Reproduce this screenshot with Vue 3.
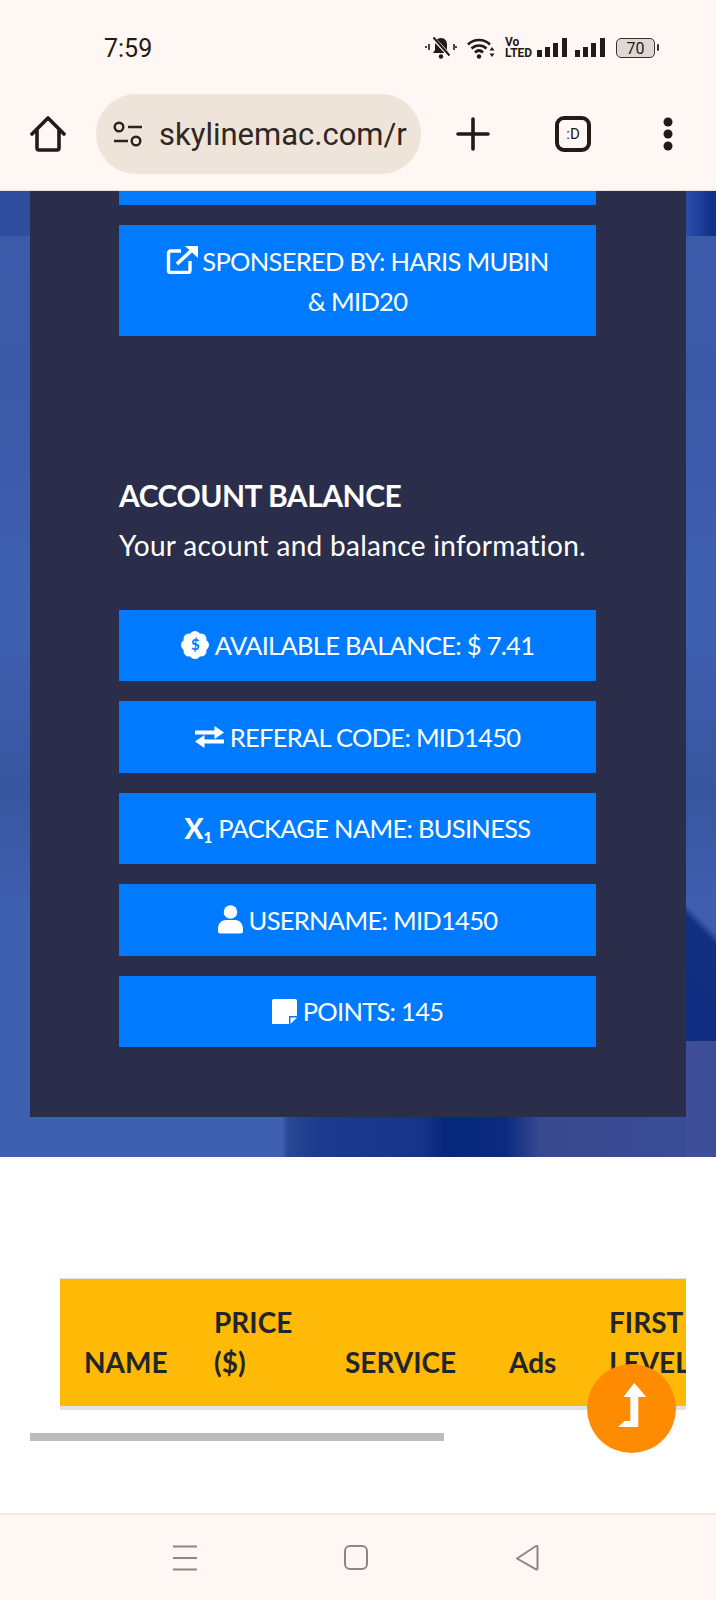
<script setup>
const rows = [
  { key: 'seal', label: 'AVAILABLE BALANCE: $ 7.41' },
  { key: 'swap', label: 'REFERAL CODE: MID1450' },
  { key: 'x', label: 'PACKAGE NAME: BUSINESS' },
  { key: 'user', label: 'USERNAME: MID1450' },
  { key: 'note', label: 'POINTS: 145' },
]
</script>

<template>
  <div class="page">
    <header class="chrome">
      <div class="status">
        <span class="time">7:59</span>
        <div class="status-icons">
          <svg class="s-bell" width="32" height="24" viewBox="0 0 32 24">
            <path d="M16 2c-4 0-6 3-6 7v5l-2 3h16l-2-3V9c0-4-2-7-6-7z" fill="#221a16"/>
            <circle cx="16" cy="20.5" r="2.2" fill="#221a16"/>
            <path d="M8 2l17 18" stroke="#fff7f3" stroke-width="4"/>
            <path d="M8.500 1.500l16 18" stroke="#221a16" stroke-width="2"/>
            <path d="M4 8v6M29 8v6M1 10v2M31 10v2" stroke="#221a16" stroke-width="1.600"/>
          </svg>
          <svg class="s-wifi" width="28" height="22" viewBox="0 0 28 22">
            <path d="M1 7.500c6-6 16-6 22 0M4.500 11.500c4-4 11-4 15 0M8 15.500c2.500-2.500 5.500-2.500 8 0" fill="none" stroke="#221a16" stroke-width="2.600"/>
            <circle cx="12" cy="19.500" r="2.200" fill="#221a16"/>
            <path d="M25 10l2.500 3.500h-5zM25 20l2.500-3.500h-5z" fill="#221a16"/>
          </svg>
          <span class="volte"><i>Vo</i><i>LTED</i></span>
          <svg class="s-sig" width="30" height="20" viewBox="0 0 30 20">
            <path d="M0 12h5v7H0zM8 9h5v10H8zM16 5h5v14h-5zM25 0h5v19h-5z" fill="#221a16"/>
          </svg>
          <svg class="s-sig" width="30" height="20" viewBox="0 0 30 20">
            <path d="M0 12h5v7H0zM8 9h5v10H8zM16 5h5v14h-5zM25 0h5v19h-5z" fill="#221a16"/>
          </svg>
          <span class="battery"><span>70</span></span>
        </div>
      </div>
      <div class="toolbar">
        <svg class="t-home" width="36" height="36" viewBox="0 0 36 36">
          <path d="M2 18L18 2l16 16M7 14v18a2 2 0 0 0 2 2h18a2 2 0 0 0 2-2V14" fill="none" stroke="#221a16" stroke-width="3.600" stroke-linejoin="round" stroke-linecap="round"/>
        </svg>
        <div class="pill">
          <svg width="30" height="26" viewBox="0 0 30 26">
            <circle cx="6" cy="6" r="4.300" fill="none" stroke="#2b2320" stroke-width="2.400"/>
            <circle cx="23" cy="20" r="4.300" fill="none" stroke="#2b2320" stroke-width="2.400"/>
            <path d="M15 6h14M1 20h14" stroke="#2b2320" stroke-width="2.400"/>
          </svg>
          <span class="url">skylinemac.com/r</span>
        </div>
        <svg class="t-plus" width="36" height="36" viewBox="0 0 36 36">
          <path d="M18 3v30M3 18h30" stroke="#221a16" stroke-width="3.600" stroke-linecap="round"/>
        </svg>
        <span class="tab-count">:D</span>
        <svg class="t-dots" width="12" height="36" viewBox="0 0 12 36">
          <circle cx="6" cy="6" r="4.500" fill="#221a16"/>
          <circle cx="6" cy="18" r="4.500" fill="#221a16"/>
          <circle cx="6" cy="30" r="4.500" fill="#221a16"/>
        </svg>
      </div>
    </header>

    <section class="hero">
      <div class="panel">
        <div class="btn-tail"></div>
        <div class="btn sponsor">
          <svg class="ico" width="32" height="28" viewBox="0 0 32 28">
            <path d="M15 5H4.500A2 2 0 0 0 2.500 7v17.500a2 2 0 0 0 2 2H22a2 2 0 0 0 2-2V15" fill="none" stroke="#fff" stroke-width="3.400"/>
            <path d="M11 18L26 4" stroke="#fff" stroke-width="3.600"/>
            <path d="M19 0h13v12z" fill="#fff"/>
          </svg>
          SPONSERED BY: HARIS MUBIN &amp; MID20
        </div>

        <h2 class="title">ACCOUNT BALANCE</h2>
        <p class="sub">Your acount and balance information.</p>

        <div class="list">
          <div v-for="r in rows" :key="r.key" class="btn row">
            <svg v-if="r.key === 'seal'" width="28" height="28" viewBox="0 0 28 28">
              <g fill="#fff">
                <circle cx="14" cy="5.500" r="5.500"/><circle cx="14" cy="22.500" r="5.500"/>
                <circle cx="5.500" cy="14" r="5.500"/><circle cx="22.500" cy="14" r="5.500"/>
                <circle cx="8" cy="8" r="5.500"/><circle cx="20" cy="8" r="5.500"/>
                <circle cx="8" cy="20" r="5.500"/><circle cx="20" cy="20" r="5.500"/>
                <circle cx="14" cy="14" r="9"/>
              </g>
              <text x="14" y="19" text-anchor="middle" class="dollar">$</text>
            </svg>
            <svg v-else-if="r.key === 'swap'" width="29" height="22" viewBox="0 0 29 22">
              <path d="M0 6.500h22M6 15.500h23" stroke="#fff" stroke-width="4"/>
              <path d="M19.500 0l9.500 6.500-9.500 6.500zM9.500 9v13L0 15.500z" fill="#fff"/>
            </svg>
            <span v-else-if="r.key === 'x'" class="x-ico">X<sub>1</sub></span>
            <svg v-else-if="r.key === 'user'" width="25" height="29" viewBox="0 0 25 29">
              <circle cx="12.500" cy="7" r="6.800" fill="#fff"/>
              <path d="M0 24c0-6 4-9 8-9h9c4 0 8 3 8 9v2a2.500 2.500 0 0 1-2.500 2.500h-20A2.500 2.500 0 0 1 0 26z" fill="#fff"/>
            </svg>
            <svg v-else width="25" height="25" viewBox="0 0 25 25">
              <path d="M2 0h21a2 2 0 0 1 2 2v15h-8v8H0V2a2 2 0 0 1 2-2z" fill="#fff"/>
              <path d="M25 18.500L18.500 25v-6.500z" fill="#fff"/>
            </svg>
            <span>{{ r.label }}</span>
          </div>
        </div>
      </div>
    </section>

    <section class="plans">
      <div class="table">
        <div class="th" style="--w: 130px">NAME</div>
        <div class="th" style="--w: 131px">PRICE<br />($)</div>
        <div class="th" style="--w: 164px">SERVICE</div>
        <div class="th" style="--w: 100px">Ads</div>
        <div class="th" style="--w: 101px">FIRST<br />LEVEL</div>
      </div>
      <div class="scrollbar"></div>
      <button class="fab" aria-label="Back to top">
        <svg width="89" height="89" viewBox="6.700 9 89 89">
          <path d="M54 28L66 42H58V72H38L44 66H50V42H43Z" fill="#fff"/>
        </svg>
      </button>
    </section>

    <nav class="nav">
      <svg width="24" height="26" viewBox="0 0 24 26">
        <path d="M0 1.500h24M0 13h24M0 24.500h24" stroke="#8f8683" stroke-width="2"/>
      </svg>
      <svg width="24" height="26" viewBox="0 0 24 26">
        <rect x="1" y="1" width="22" height="23" rx="5" fill="none" stroke="#8f8683" stroke-width="2"/>
      </svg>
      <svg width="24" height="26" viewBox="0 0 24 26">
        <path d="M22.500 1.500v22a1 1 0 0 1-1.500 .8L2 13.500 21 1a1 1 0 0 1 1.500 .5z" fill="none" stroke="#8f8683" stroke-width="2" stroke-linejoin="round"/>
      </svg>
    </nav>
  </div>
</template>

<style scoped>
.page {
  width: 716px;
  height: 1600px;
  overflow: hidden;
  position: relative;
  background: #fff;
  font-family: "Lato", "Noto Sans", sans-serif;
  color: #fff;
}
.chrome {
  height: 191px;
  box-sizing: border-box;
  background: #fff7f3;
  border-bottom: 1px solid #ece0da;
  color: #221a16;
}
.status {
  height: 94px;
  padding: 2px 0 0 104px;
  box-sizing: border-box;
  display: flex;
  align-items: center;
}
.time {
  font: 400 25px "Roboto", sans-serif;
  color: #221a16;
}
.status-icons {
  position: absolute;
  left: 425px;
  top: 36px;
  display: flex;
  align-items: center;
  height: 24px;
}
.s-wifi { margin-left: 10px; }
.volte {
  margin-left: 10px;
  width: 24px;
  display: flex;
  flex-direction: column;
  font: 700 12px/11px "Roboto", sans-serif;
  color: #221a16;
}
.volte i { font-style: normal; }
.s-sig { margin-left: 8px; }
.battery {
  margin-left: 11px;
  width: 39px;
  height: 20px;
  box-sizing: border-box;
  border: 1.500px solid #3a322e;
  border-radius: 5px;
  background: #dcd8d5;
  position: relative;
  display: flex;
  align-items: center;
  justify-content: center;
  font: 400 16px "Roboto", sans-serif;
  color: #221a16;
}
.battery::after {
  content: "";
  position: absolute;
  right: -5px;
  top: 5px;
  width: 2px;
  height: 7px;
  background: #3a322e;
  border-radius: 1px;
}
.toolbar {
  height: 80px;
  padding-left: 30px;
  display: flex;
  align-items: center;
}
.pill {
  margin-left: 30px;
  width: 325px;
  height: 80px;
  box-sizing: border-box;
  padding: 0 8px 0 17px;
  border-radius: 40px;
  background: #efe4da;
  display: flex;
  align-items: center;
  gap: 16px;
}
.pill svg { flex: none; }
.url {
  font: 400 31px "Roboto", sans-serif;
  color: #2f2723;
  white-space: nowrap;
}
.t-plus { margin-left: 34px; }
.tab-count {
  margin-left: 64px;
  width: 36px;
  height: 36px;
  box-sizing: border-box;
  border: 4px solid #221a16;
  border-radius: 9px;
  display: flex;
  align-items: center;
  justify-content: center;
  font: 400 15px "Roboto", sans-serif;
  color: #221a16;
}
.t-dots { margin-left: 71px; }

.hero {
  height: 966px;
  box-sizing: border-box;
  padding: 0 30px;
  background:
    linear-gradient(90deg, #2f4d9e 0 686px, #2548a8 692px, #11308a 712px) top / 100% 45px no-repeat,
    linear-gradient(90deg, #3f4f98, #3d4e98) right bottom / 30px 116px no-repeat,
    linear-gradient(225deg, #3f5fae 0 17%, #12307f 24%, #0f2d82 100%) right 714px / 30px 136px no-repeat,
    linear-gradient(90deg, #3f60b0 0 282px, #2a4795 288px, #1c3a8c 320px, #17348a 420px, #06277c 445px, #0b2a80 505px, #38498f 540px, #3b4d96 100%) bottom / 100% 40px no-repeat,
    linear-gradient(180deg, #3c5cab, #3a5aa8 20%, #3f60b0 45%, #36569f 62%, #3f60b0 75%, #3f60b0);
}
.panel {
  height: 926px;
  box-sizing: border-box;
  padding: 0 90px 0 89px;
  background: #2b2e4a;
}
.btn-tail {
  height: 14px;
  background: #007bff;
}
.btn {
  background: #007bff;
  color: #fff;
  font-size: 25.500px;
  line-height: 40px;
  letter-spacing: -0.7px;
  text-align: center;
}
.sponsor {
  margin-top: 20px;
  height: 111px;
  box-sizing: border-box;
  padding: 15.500px 40px;
}
.sponsor .ico {
  vertical-align: -3px;
  margin-right: -2px;
}
.title {
  margin: 0;
  padding-top: 139px;
  font-size: 30px;
  font-weight: 700;
  line-height: 40px;
  letter-spacing: -0.5px;
  color: #fff;
}
.sub {
  margin: 10px 0 0;
  font-size: 28px;
  line-height: 40px;
  letter-spacing: 0.3px;
  color: #fff;
  white-space: nowrap;
}
.list {
  margin-top: 44.500px;
  display: flex;
  flex-direction: column;
  gap: 20px;
}
.row {
  height: 71.500px;
  display: flex;
  align-items: center;
  justify-content: center;
  gap: 6px;
}
.dollar {
  font: 700 15px "Lato", sans-serif;
  fill: #007bff;
}
.x-ico {
  font-size: 28px;
  font-weight: 900;
  line-height: 1;
  letter-spacing: 0;
  color: #fff;
}
.x-ico sub {
  font-size: 15px;
  font-weight: 900;
  line-height: 0;
  vertical-align: -4px;
}

.plans {
  height: 356px;
  box-sizing: border-box;
  padding-top: 121px;
  position: relative;
}
.table {
  margin: 0 30px 0 60px;
  height: 132px;
  box-sizing: border-box;
  padding-bottom: 24px;
  background: #ffb907;
  border-top: 1px solid #e4e1d8;
  border-bottom: 4px solid #e2e2e2;
  display: flex;
  align-items: flex-end;
  overflow: hidden;
}
.th {
  flex: none;
  width: var(--w);
  box-sizing: border-box;
  padding-left: 24px;
  color: #212529;
  font-size: 28px;
  font-weight: 700;
  line-height: 40px;
  white-space: nowrap;
}
.scrollbar {
  margin: 23px 0 0 30px;
  width: 414px;
  height: 8px;
  background: #bcbcbc;
}
.fab {
  position: absolute;
  left: 587px;
  top: 207px;
  width: 89px;
  height: 89px;
  padding: 0;
  border: 0;
  border-radius: 50%;
  background: #ff8c00;
}
.fab svg { display: block; }

.nav {
  height: 87px;
  box-sizing: border-box;
  padding: 30px 0 0 173px;
  background: #fff7f3;
  border-top: 2px solid #f8e6de;
  display: flex;
  align-items: flex-start;
  gap: 147px;
}
</style>
